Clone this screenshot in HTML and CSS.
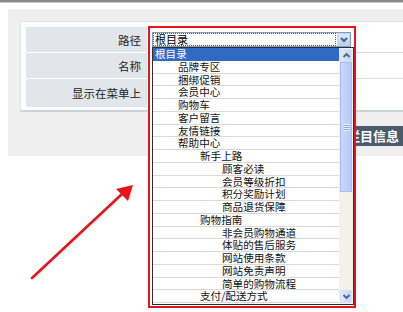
FILE: index.html
```html
<!DOCTYPE html>
<html>
<head>
<meta charset="utf-8">
<link rel="stylesheet" href="styles.css">
</head>
<body>
<div class="topbar"></div>
<div class="page">
  <div class="panel">
    <div class="inner">
      <div class="row r1"><div class="label">路径</div><div class="value"></div></div>
      <div class="row r2"><div class="label">名称</div><div class="value"></div></div>
      <div class="row r3"><div class="label">显示在菜单上</div><div class="value"></div></div>
    </div>
    <div class="actions"><button class="btn">更新栏目信息</button></div>
  </div>
</div>

<div class="popup">
  <div class="select">
    <div class="sel-text">根目录</div>
    <div class="sel-arrow"><svg width="10" height="8" viewBox="0 0 10 8"><path d="M2 2 L5 5 L8 2" fill="none" stroke="#4d6185" stroke-width="2"/></svg></div>
  </div>
  <div class="listbox">
    <div class="options">
      <div class="opt l0 sel">根目录</div>
      <div class="opt l1">品牌专区</div>
      <div class="opt l1">捆绑促销</div>
      <div class="opt l1">会员中心</div>
      <div class="opt l1">购物车</div>
      <div class="opt l1">客户留言</div>
      <div class="opt l1">友情链接</div>
      <div class="opt l1">帮助中心</div>
      <div class="opt l2">新手上路</div>
      <div class="opt l3">顾客必读</div>
      <div class="opt l3">会员等级折扣</div>
      <div class="opt l3">积分奖励计划</div>
      <div class="opt l3">商品退货保障</div>
      <div class="opt l2">购物指南</div>
      <div class="opt l3">非会员购物通道</div>
      <div class="opt l3">体贴的售后服务</div>
      <div class="opt l3">网站使用条款</div>
      <div class="opt l3">网站免责声明</div>
      <div class="opt l3">简单的购物流程</div>
      <div class="opt l2">支付/配送方式</div>
    </div>
    <div class="scrollbar">
      <div class="sb-btn"><svg width="9" height="7" viewBox="0 0 9 7"><path d="M1.5 5 L4.5 2 L7.5 5" fill="none" stroke="#4d6185" stroke-width="1.8"/></svg></div>
      <div class="thumb"><div class="grip"></div></div>
      <div class="track"></div>
      <div class="sb-btn"><svg width="9" height="7" viewBox="0 0 9 7"><path d="M1.5 2 L4.5 5 L7.5 2" fill="none" stroke="#4d6185" stroke-width="1.8"/></svg></div>
    </div>
  </div>
</div>

<svg class="arrow" width="403" height="312" viewBox="0 0 403 312">
  <line x1="32" y1="278" x2="122" y2="194" stroke="#e8141a" stroke-width="2.6" stroke-linecap="round"/>
  <polygon points="133,185 116,189 128,201" fill="#e8141a"/>
</svg>
</body>
</html>
```
FILE: styles.css
```css
html, body {
  margin: 0;
  padding: 0;
  background: #ffffff;
  font-family: "Noto Sans CJK SC", "Noto Sans", sans-serif;
  overflow: hidden;
}
.topbar {
  height: 2px;
  background: #8a8a8a;
  border-bottom: 1px solid #c8c8c8;
}
.page {
  padding: 6px 0 0 8px;
}
.panel {
  background: #efefef;
  height: 147px;
  padding: 12px 0 0 12px;
  box-sizing: border-box;
}
.inner {
  background: #ffffff;
  border-top: 1px solid #e2e2e2;
  border-left: 1px solid #e2e2e2;
  border-bottom: 2px solid #cfd2d5;
  padding: 5px 0 3px 5px;
}
.row {
  display: flex;
  height: 25px;
  border-bottom: 1px solid #dcdcdc;
}
.row.r3 {
  height: 28px;
  border-bottom: none;
}
.label {
  width: 121px;
  background: #e2e6ea;
  border-bottom: 1px solid #ffffff;
  margin-bottom: -1px;
  text-align: right;
  padding-right: 6px;
  box-sizing: border-box;
  font-size: 11.5px;
  color: #222;
  display: flex;
  align-items: center;
  justify-content: flex-end;
}
.value {
  flex: 1;
}
.actions {
  display: flex;
  padding: 14px 0 0 286px;
}
.btn {
  height: 20px;
  width: 98px;
  padding: 0 4px 0 0;
  border: none;
  background: #4a5c6c;
  color: #ffffff;
  font-family: "Noto Sans CJK SC", sans-serif;
  font-weight: bold;
  font-size: 13px;
  text-align: right;
  line-height: 20px;
}
.popup {
  position: absolute;
  left: 148px;
  top: 26px;
  width: 208px;
  height: 282px;
  box-sizing: border-box;
  border: 2px solid #e8141a;
  background: #ffffff;
  padding: 4px 1px 2px 2px;
}
.select {
  display: flex;
  height: 15px;
  width: 199px;
  box-sizing: border-box;
  border: 1px solid #7f9db9;
  background: #fff;
}
.sel-text {
  flex: 1;
  border: 1px dotted #555;
  font-size: 11px;
  line-height: 11px;
  padding-left: 1px;
  color: #000;
  margin-right: 1px;
}
.sel-arrow {
  width: 13px;
  background: linear-gradient(#dfe8fb, #b9cdf5);
  border: 1px solid #c3d3f7;
  box-sizing: border-box;
  display: flex;
  align-items: center;
  justify-content: center;
}
.listbox {
  display: flex;
  width: 202px;
  height: 258px;
  box-sizing: border-box;
  border: 1px solid #2f2f2f;
  background: #fff;
}
.options {
  flex: 1;
}
.opt {
  height: 12.75px;
  box-sizing: border-box;
  border-bottom: 1px solid #d9d9d9;
  font-size: 10.6px;
  line-height: 11.75px;
  color: #111;
  white-space: nowrap;
}
.opt.sel {
  background: #316ac5;
  color: #ffffff;
  border-bottom-color: #316ac5;
}
.l0 { padding-left: 2px; }
.l1 { padding-left: 25px; }
.l2 { padding-left: 47px; }
.l3 { padding-left: 69px; }
.scrollbar {
  width: 14px;
  display: flex;
  flex-direction: column;
  background: #f3f1ea;
  padding: 1px 1px 1px 1px;
  box-sizing: border-box;
}
.sb-btn {
  height: 13px;
  background: linear-gradient(90deg, #e2eafc, #c3d4fb);
  border: 1px solid #d6e0f9;
  box-sizing: border-box;
  display: flex;
  align-items: center;
  justify-content: center;
}
.thumb {
  height: 130px;
  background: linear-gradient(90deg, #cad8fc, #b5c8f7);
  border: 1px solid #a9bdef;
  box-sizing: border-box;
  position: relative;
}
.grip {
  position: absolute;
  left: 3px;
  top: 61px;
  width: 6px;
  height: 7px;
  background: repeating-linear-gradient(#eef3fe 0 1px, #8ea6e4 1px 2px);
}
.track {
  flex: 1;
}
.arrow {
  position: absolute;
  left: 0;
  top: 0;
  pointer-events: none;
}
```
